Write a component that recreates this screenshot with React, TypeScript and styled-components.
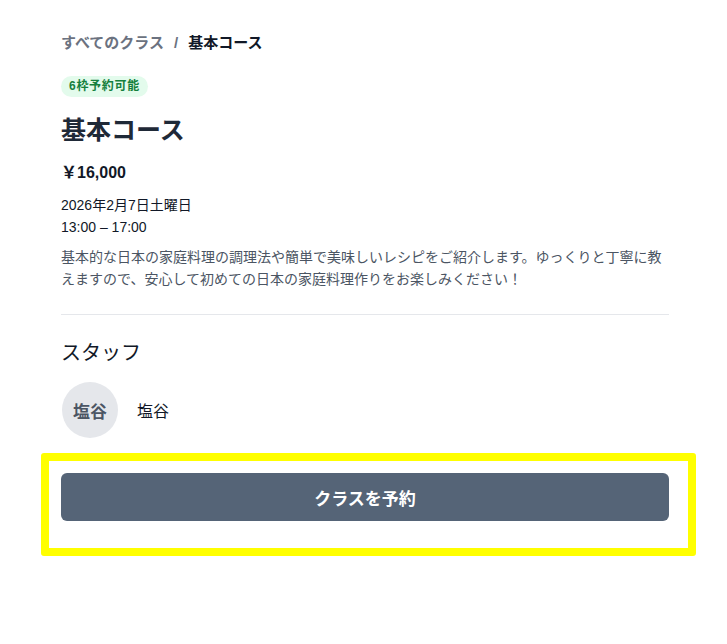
import React from "react";
import styled, { createGlobalStyle } from "styled-components";

const Global = createGlobalStyle`
  html, body { margin: 0; padding: 0; background: #fff; }
  body { font-family: "Liberation Sans", "Noto Sans CJK JP", sans-serif; color: #1f2937; }
`;

const Page = styled.div`
  width: 608px;
  padding: 32px 58px 40px 61px;
  display: flex;
  flex-direction: column;
`;

const Breadcrumb = styled.nav`
  display: flex;
  align-items: center;
  gap: 10px;
  font-size: 15px;
  font-weight: 700;
  line-height: 22px;
`;

const Crumb = styled.span<{ $current?: boolean }>`
  color: ${(p) => (p.$current ? "#111827" : "#6b7280")};
`;

const Badge = styled.span`
  align-self: flex-start;
  margin-top: 22px;
  padding: 0 8px;
  height: 21px;
  line-height: 21px;
  border-radius: 999px;
  background: #e3fbec;
  color: #15803d;
  font-size: 12px;
  font-weight: 700;
  letter-spacing: 0.06em;
`;

const Title = styled.h1`
  margin: 17px 0 0;
  font-size: 25px;
  line-height: 32px;
  font-weight: 700;
  color: #1f2937;
`;

const Price = styled.div`
  margin-top: 15px;
  font-size: 16px;
  font-weight: 700;
  line-height: 24px;
  color: #111827;
`;

const Info = styled.div`
  margin-top: 9px;
  display: flex;
  flex-direction: column;
  font-size: 14px;
  line-height: 22px;
  color: #111827;
`;

const Description = styled.p`
  margin: 8px 0 0;
  font-size: 14px;
  line-height: 22px;
  color: #4b5563;
`;

const Divider = styled.hr`
  margin: 24px 0 0;
  border: none;
  border-top: 1px solid #e5e7eb;
`;

const SectionTitle = styled.h2`
  margin: 24px 0 0;
  font-size: 20px;
  font-weight: 400;
  line-height: 28px;
  color: #111827;
`;

const StaffRow = styled.div`
  margin-top: 15px;
  display: flex;
  align-items: center;
  gap: 19px;
`;

const Avatar = styled.div`
  width: 56px;
  height: 56px;
  margin-left: 1px;
  border-radius: 50%;
  background: #e5e7eb;
  color: #4b5563;
  font-size: 17px;
  font-weight: 700;
  display: flex;
  align-items: center;
  justify-content: center;
`;

const StaffName = styled.span`
  font-size: 16px;
  color: #111827;
`;

const Highlight = styled.div`
  margin: 15px -27px 0 -20px;
  border: 8px solid #ffff00;
  border-radius: 3px;
  padding: 12px 19px 27px 12px;
`;

const BookButton = styled.button`
  display: block;
  width: 100%;
  height: 48px;
  border: none;
  border-radius: 6px;
  background: #556477;
  color: #fff;
  font-family: inherit;
  font-size: 17px;
  font-weight: 700;
  cursor: pointer;
`;

export default function App() {
  return (
    <>
      <Global />
      <Page>
        <Breadcrumb>
          <Crumb>すべてのクラス</Crumb>
          <Crumb>/</Crumb>
          <Crumb $current>基本コース</Crumb>
        </Breadcrumb>
        <Badge>6枠予約可能</Badge>
        <Title>基本コース</Title>
        <Price>￥16,000</Price>
        <Info>
          <span>2026年2月7日土曜日</span>
          <span>13:00 – 17:00</span>
        </Info>
        <Description>
          基本的な日本の家庭料理の調理法や簡単で美味しいレシピをご紹介します。ゆっくりと丁寧に教えますので、安心して初めての日本の家庭料理作りをお楽しみください！
        </Description>
        <Divider />
        <SectionTitle>スタッフ</SectionTitle>
        <StaffRow>
          <Avatar>塩谷</Avatar>
          <StaffName>塩谷</StaffName>
        </StaffRow>
        <Highlight>
          <BookButton>クラスを予約</BookButton>
        </Highlight>
      </Page>
    </>
  );
}
